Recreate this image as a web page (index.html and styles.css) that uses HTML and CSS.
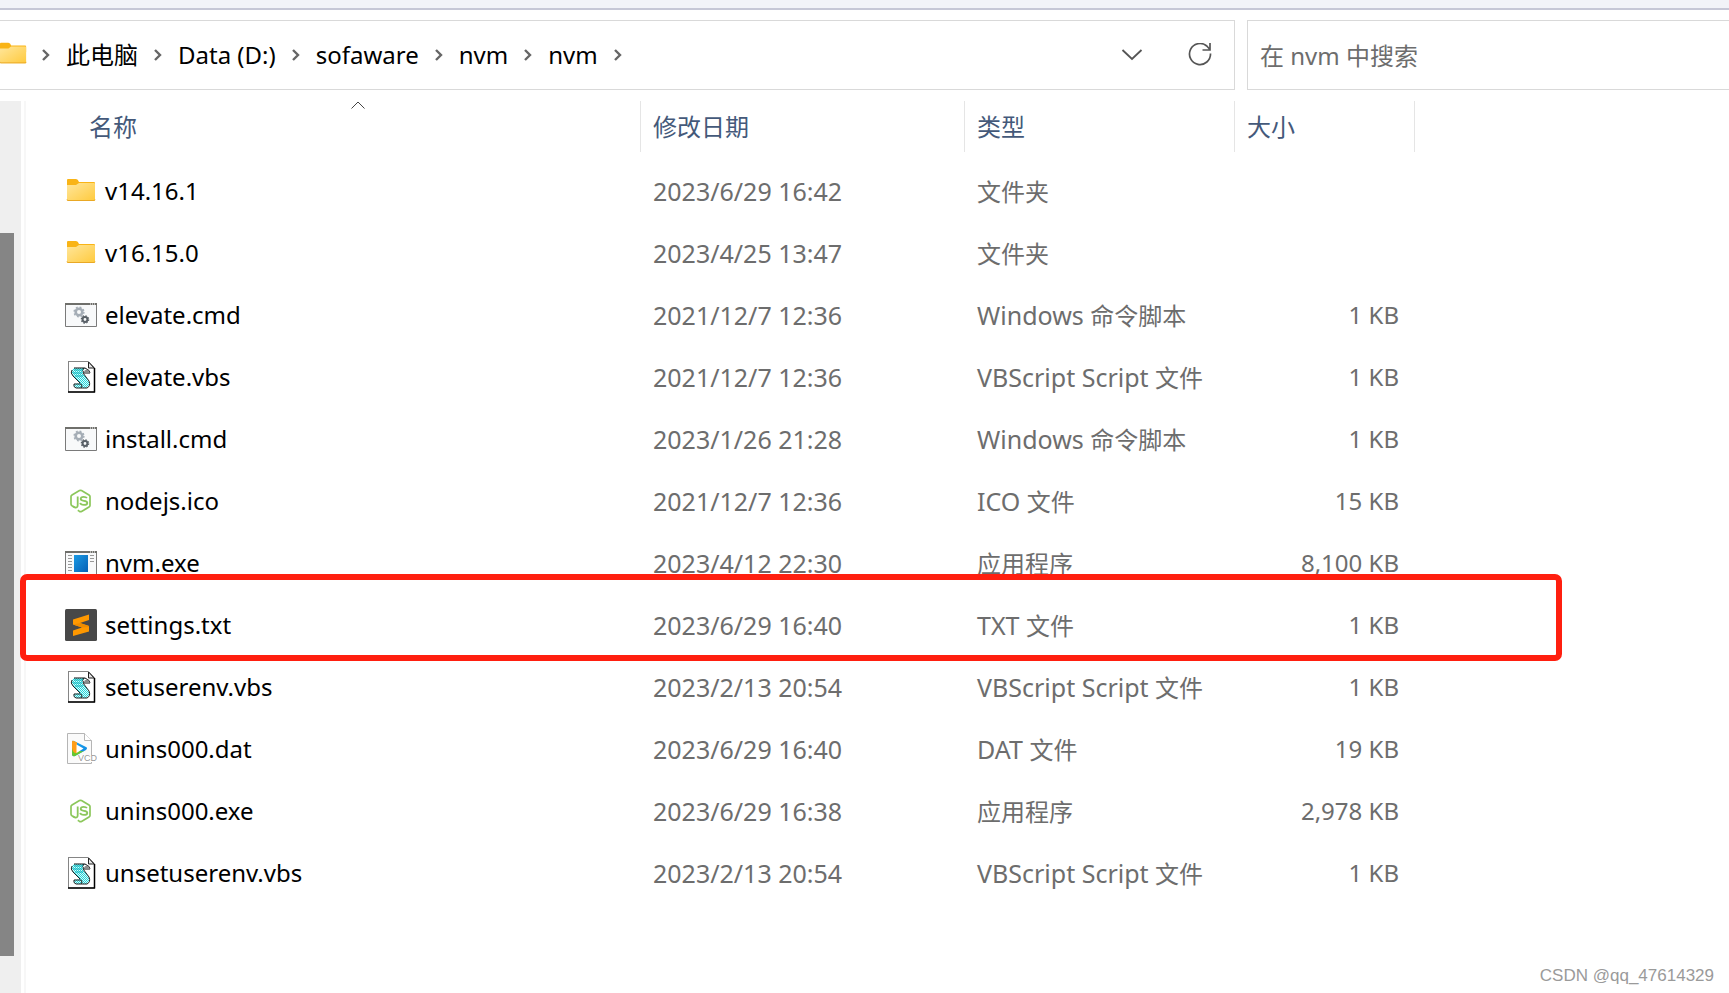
FILE: index.html
```
<!DOCTYPE html>
<html lang="zh-CN">
<head>
<meta charset="utf-8">
<title>nvm</title>
<link rel="stylesheet" href="styles.css">
</head>
<body>
<svg class="sprite" aria-hidden="true">
  <defs>
    <linearGradient id="g-folder" x1="0" y1="0" x2="1" y2="1"><stop offset="0" stop-color="#ffe69b"/><stop offset="1" stop-color="#ffca3d"/></linearGradient>
    <linearGradient id="g-exe" x1="0" y1="0" x2="1" y2="1"><stop offset="0" stop-color="#1b9ae4"/><stop offset="1" stop-color="#0560b6"/></linearGradient>
    <linearGradient id="g-vcd" x1="0" y1="0" x2="1" y2="1"><stop offset="0" stop-color="#1aa6f2"/><stop offset="1" stop-color="#0f86e0"/></linearGradient>
    <pattern id="p-teal" width="2" height="2" patternUnits="userSpaceOnUse"><rect width="2" height="2" fill="#d9fbfb"/><rect width="1" height="1" fill="#25d3d8"/><rect x="1" y="1" width="1" height="1" fill="#25d3d8"/></pattern>
  </defs>
  <symbol id="i-folder" viewBox="0 0 32 32">
    <path d="M2 5q0-1 1-1h8q2 0 3 3h15q1 0 1 1v6H2z" fill="#f9b416"/>
    <path d="M2 10h9l3-2h15q1 0 1 1v16q0 1-1 1H3q-1 0-1-1z" fill="url(#g-folder)"/>
    <path d="M2 24.500q0 1 1 1h26q1 0 1-1" fill="none" stroke="#e9a825"/>
  </symbol>
  <symbol id="i-cmd" viewBox="0 0 32 32">
    <path d="M.5 4.500h31v23H.5z" fill="#f8f9fa" stroke="#7a7a7a"/>
    <path d="M0 4h32v2H0z" fill="#6f6f6b"/><path d="M25 5h1m1 0h1m1 0h1" stroke="#fff"/>
    <circle cx="14" cy="13" r="3.300" fill="none" stroke="#a5adb6" stroke-width="2.600"/>
    <circle cx="14" cy="13" r="4.900" fill="none" stroke="#a5adb6" stroke-width="1.400" stroke-dasharray="1.900 1.950"/>
    <circle cx="20" cy="20.500" r="2.400" fill="none" stroke="#596067" stroke-width="2"/>
    <circle cx="20" cy="20.500" r="3.700" fill="none" stroke="#596067" stroke-width="1.200" stroke-dasharray="1.450 1.450"/>
  </symbol>
  <symbol id="i-vbs" viewBox="0 0 32 32">
    <path d="M3 .5h20.500l6 6v24.500H3.500V.5" fill="#fff" stroke="#858585"/>
    <path d="M23.500 1v6H29z" fill="#e5e5e5" stroke="#222"/>
    <path d="M29.500 7v24.500M3 31h27" fill="none" stroke="#000" stroke-width="1.500"/>
    <path d="M9 7h11q-3 2-2 5l6 8q1 5-2 7H11q-3-1-2-4l6-1-8-9q-2-4 2-6z" fill="url(#p-teal)"/>
    <path d="M9 7h11q5 2 5 5h-6q-3-3 0-5" fill="none" stroke="#111"/>
    <path d="M18 12l6 8q2 5-2 7H11q-3-1-2-4h7q2 2 0 4M7 9q-2 3 1 6l7 7" fill="none" stroke="#222"/>
    <path d="M19 10l3-2 3 4h-5z" fill="#8b8b8b"/>
    <path d="M9 9h9m-10 3h9m-7 3h8" stroke="#0fb4bd"/>
  </symbol>
  <symbol id="i-node" viewBox="0 0 32 32">
    <path d="M10 22.500l-3-1.700q-1-.6-1-1.700V11.500q0-1 1-1.600l7.500-4.300q1-.6 2 0L24 9.900q1 .6 1 1.600v9q0 1-1 1.600l-7.500 4.300q-1 .6-2 0L12.800 25.300" fill="none" stroke="#8cc75b" stroke-width="1.700"/>
    <path d="M12.700 11.500v8.500q0 3-2.700 2.500l-2-1M22 13q-1-1.200-3.300-1.200-3 0-3 2 0 1.700 3.200 2 3.400.3 3.400 2.100 0 2-3.400 2-3.300 0-3.700-2" fill="none" stroke="#8cc75b" stroke-width="1.800"/>
  </symbol>
  <symbol id="i-exe" viewBox="0 0 32 32">
    <path d="M.5 4.500h31v23H.5z" fill="#f8f9fa" stroke="#7a7a7a"/>
    <path d="M0 4h32v2H0z" fill="#6f6f6b"/><path d="M25 5h1m1 0h1m1 0h1" stroke="#fff"/>
    <path d="M9 8h14v17H9z" fill="url(#g-exe)"/>
    <path d="M3 8.500h4m-4 3h4m-4 3h4m-4 3h4m-4 3h4m-4 3h4M25 8.500h4m-4 3h4m-4 3h4" stroke="#999"/>
  </symbol>
  <symbol id="i-sublime" viewBox="0 0 32 32">
    <rect width="32" height="32" rx="1.500" fill="#484848"/>
    <path d="M8 10.500L24 5.500v5.500l-9 3 9 3v5.500L8 27v-5.500l9-3-9-3z" fill="#ff9800"/>
    <path d="M8 15.500l7-1.500 9 3v1l-7 .5z" fill="#f08c00"/>
  </symbol>
  <symbol id="i-next" viewBox="0 0 10 14"><path d="M2 2l5 5-5 5" fill="none" stroke="#666" stroke-width="2.400"/></symbol>
</svg>

<div class="window">
  <div class="titlebar"></div>
  <header class="toolbar">
    <nav class="address" aria-label="地址栏">
      <svg class="root-icon" viewBox="2 0 30 32"><use href="#i-folder" width="32" height="32"/></svg>
      <svg class="next"><use href="#i-next"/></svg>
      <a class="crumb" href="#">此电脑</a><svg class="next"><use href="#i-next"/></svg>
      <a class="crumb" href="#">Data (D:)</a><svg class="next"><use href="#i-next"/></svg>
      <a class="crumb" href="#">sofaware</a><svg class="next"><use href="#i-next"/></svg>
      <a class="crumb" href="#">nvm</a><svg class="next"><use href="#i-next"/></svg>
      <a class="crumb" href="#">nvm</a><svg class="next"><use href="#i-next"/></svg>
      <span class="tools">
        <button class="tool" aria-label="以前的位置"><svg viewBox="0 0 24 24"><path d="M2.500 7l9.500 9 9.500-9" fill="none" stroke="#555" stroke-width="1.800"/></svg></button>
        <button class="tool" aria-label="刷新"><svg viewBox="0 0 24 24"><path d="M22.500 10.500A10.500 10.500 0 1 1 18.800 3l2.700 3M22 0v7h-7.500" fill="none" stroke="#555" stroke-width="1.700"/></svg></button>
      </span>
    </nav>
    <input class="search" type="search" placeholder="在 nvm 中搜索" aria-label="在 nvm 中搜索">
  </header>

  <div class="content">
    <div class="scroll-track"><div class="scroll-thumb"></div></div>
    <main class="files">
      <table class="list">
        <colgroup><col class="c-name"><col class="c-date"><col class="c-type"><col class="c-size"></colgroup>
        <thead>
          <tr>
            <th class="h-name" aria-sort="ascending">名称<svg class="sort" viewBox="0 0 14 8"><path d="M.5 7.500L7 1l6.500 6.500" fill="none" stroke="#444"/></svg></th>
            <th>修改日期</th><th>类型</th><th>大小</th>
          </tr>
        </thead>
        <tbody>
          <tr><td><span class="name"><svg class="icon"><use href="#i-folder"/></svg>v14.16.1</span></td><td>2023/6/29 16:42</td><td><span class="cjk">文件夹</span></td><td></td></tr>
          <tr><td><span class="name"><svg class="icon"><use href="#i-folder"/></svg>v16.15.0</span></td><td>2023/4/25 13:47</td><td><span class="cjk">文件夹</span></td><td></td></tr>
          <tr><td><span class="name"><svg class="icon"><use href="#i-cmd"/></svg>elevate.cmd</span></td><td>2021/12/7 12:36</td><td>Windows <span class="cjk">命令脚本</span></td><td>1 KB</td></tr>
          <tr><td><span class="name"><svg class="icon"><use href="#i-vbs"/></svg>elevate.vbs</span></td><td>2021/12/7 12:36</td><td>VBScript Script <span class="cjk">文件</span></td><td>1 KB</td></tr>
          <tr><td><span class="name"><svg class="icon"><use href="#i-cmd"/></svg>install.cmd</span></td><td>2023/1/26 21:28</td><td>Windows <span class="cjk">命令脚本</span></td><td>1 KB</td></tr>
          <tr><td><span class="name"><svg class="icon"><use href="#i-node"/></svg>nodejs.ico</span></td><td>2021/12/7 12:36</td><td>ICO <span class="cjk">文件</span></td><td>15 KB</td></tr>
          <tr><td><span class="name"><svg class="icon"><use href="#i-exe"/></svg>nvm.exe</span></td><td>2023/4/12 22:30</td><td><span class="cjk">应用程序</span></td><td>8,100 KB</td></tr>
          <tr class="marked"><td><span class="name"><svg class="icon"><use href="#i-sublime"/></svg>settings.txt</span></td><td>2023/6/29 16:40</td><td>TXT <span class="cjk">文件</span></td><td>1 KB</td></tr>
          <tr><td><span class="name"><svg class="icon"><use href="#i-vbs"/></svg>setuserenv.vbs</span></td><td>2023/2/13 20:54</td><td>VBScript Script <span class="cjk">文件</span></td><td>1 KB</td></tr>
          <tr><td><span class="name"><svg class="icon" viewBox="0 0 32 32">
            <path d="M2.500.5h17l7 7v23h-24z" fill="#fafafa" stroke="#b5b5b5"/>
            <path d="M19.500.5v7h7" fill="#fff" stroke="#b5b5b5"/>
            <path d="M7 9q0-2 2-1l12 6q2 1 0 3L10 23q-3 1-3-2z" fill="url(#g-vcd)"/>
            <path d="M7 14v7q0 3 3 2l9-5q-7 1-12-4z" fill="#67c72c"/>
            <path d="M7 15V9q0-2 2-1l3 1.500V20q-4 1-5-5z" fill="#ff9d18"/>
            <path d="M11.500 11.500l7 4-7 4.500z" fill="#fff"/>
            <path d="M14 22h18v7H14z" fill="#fff"/>
            <text x="13" y="28" class="vcd-label">VCD</text>
          </svg>unins000.dat</span></td><td>2023/6/29 16:40</td><td>DAT <span class="cjk">文件</span></td><td>19 KB</td></tr>
          <tr><td><span class="name"><svg class="icon"><use href="#i-node"/></svg>unins000.exe</span></td><td>2023/6/29 16:38</td><td><span class="cjk">应用程序</span></td><td>2,978 KB</td></tr>
          <tr><td><span class="name"><svg class="icon"><use href="#i-vbs"/></svg>unsetuserenv.vbs</span></td><td>2023/2/13 20:54</td><td>VBScript Script <span class="cjk">文件</span></td><td>1 KB</td></tr>
        </tbody>
      </table>
      <footer class="credit">CSDN @qq_47614329</footer>
    </main>
  </div>
</div>
</body>
</html>
```
FILE: styles.css
```
* { box-sizing: border-box; }

body {
  margin: 0;
  background: #fff;
  color: #000;
  font: 24px/36px "Noto Sans", "Noto Sans CJK SC", sans-serif;
}

.sprite { position: absolute; width: 0; height: 0; }
.cjk { font-size: 24px; }

.window { display: flex; flex-direction: column; min-height: 100vh; }

.titlebar { height: 10px; background: #f2f3f8; border-bottom: 2px solid #c6c7d6; }

.toolbar {
  display: grid;
  grid-template-columns: minmax(0, 1235fr) minmax(0, 482fr);
  gap: 12px;
  padding: 10px 0 11px;
}

.address {
  display: flex;
  align-items: center;
  height: 70px;
  border: 1px solid #d9d9d9;
  border-left: 0;
}
.root-icon { width: 28px; height: 30px; margin: 0 -2px 2px 0; }
.next { flex: none; width: 10px; height: 14px; margin: 0 15px; }
.crumb { color: #000; text-decoration: none; white-space: nowrap; }
.tools { display: flex; gap: 44px; margin-left: auto; padding-right: 22px; }
.tool { width: 24px; height: 24px; padding: 0; border: 0; background: none; }
.tool svg { display: block; width: 24px; height: 24px; }

.search {
  min-width: 0;
  height: 70px;
  padding: 0 12px;
  border: 1px solid #d9d9d9;
  border-right: 0;
  border-radius: 0;
  background: #fff;
  font: inherit;
  outline: 0;
  appearance: none;
}
.search::placeholder { color: #6d6d6d; opacity: 1; }

.content { display: flex; flex: 1; }

.scroll-track { flex: none; width: 21px; margin-right: 3px; padding: 132px 7px 37px 0; background: #efefef; display: flex; }
.scroll-thumb { flex: 1; background: #858585; }

.files {
  display: flex;
  flex: 1;
  flex-direction: column;
  justify-content: space-between;
  border-left: 2px solid #f7f7f7;
}

.list { width: 1389px; border-collapse: separate; border-spacing: 0; table-layout: fixed; }
.c-name { width: 615px; }
.c-date { width: 324px; }
.c-type { width: 270px; }
.c-size { width: 180px; }

.list th {
  height: 51px;
  padding: 0 0 0 12px;
  border-right: 1px solid #e5e5e5;
  color: #44597a;
  font-weight: 400;
  text-align: left;
}
.list .h-name { position: relative; padding-left: 63px; }
.sort { position: absolute; top: 0; left: 325px; width: 14px; height: 8px; }

.list tbody::before { content: ""; display: block; height: 8px; }
.list td { height: 62px; padding: 0 16px 0 12px; color: #6d6d6d; font-size: 25px; white-space: nowrap; }
.list td:first-child { padding-left: 39px; color: #000; font-size: 24px; }
.list td:last-child { font-size: 24px; text-align: right; }
.name { display: flex; align-items: center; gap: 8px; }
.icon { flex: none; width: 32px; height: 32px; }
.vcd-label { font: 9px "Liberation Sans", sans-serif; fill: #999; }

.marked { position: relative; }
.marked td:first-child::after {
  content: "";
  position: absolute;
  inset: -20px -147px -5px -6px;
  border: 6px solid #ff1f0f;
  border-radius: 7px;
  pointer-events: none;
}

.credit {
  padding: 0 15px 5px;
  color: #9a9a9a;
  font: 17px/24px "Liberation Sans", sans-serif;
  text-align: right;
}
```
